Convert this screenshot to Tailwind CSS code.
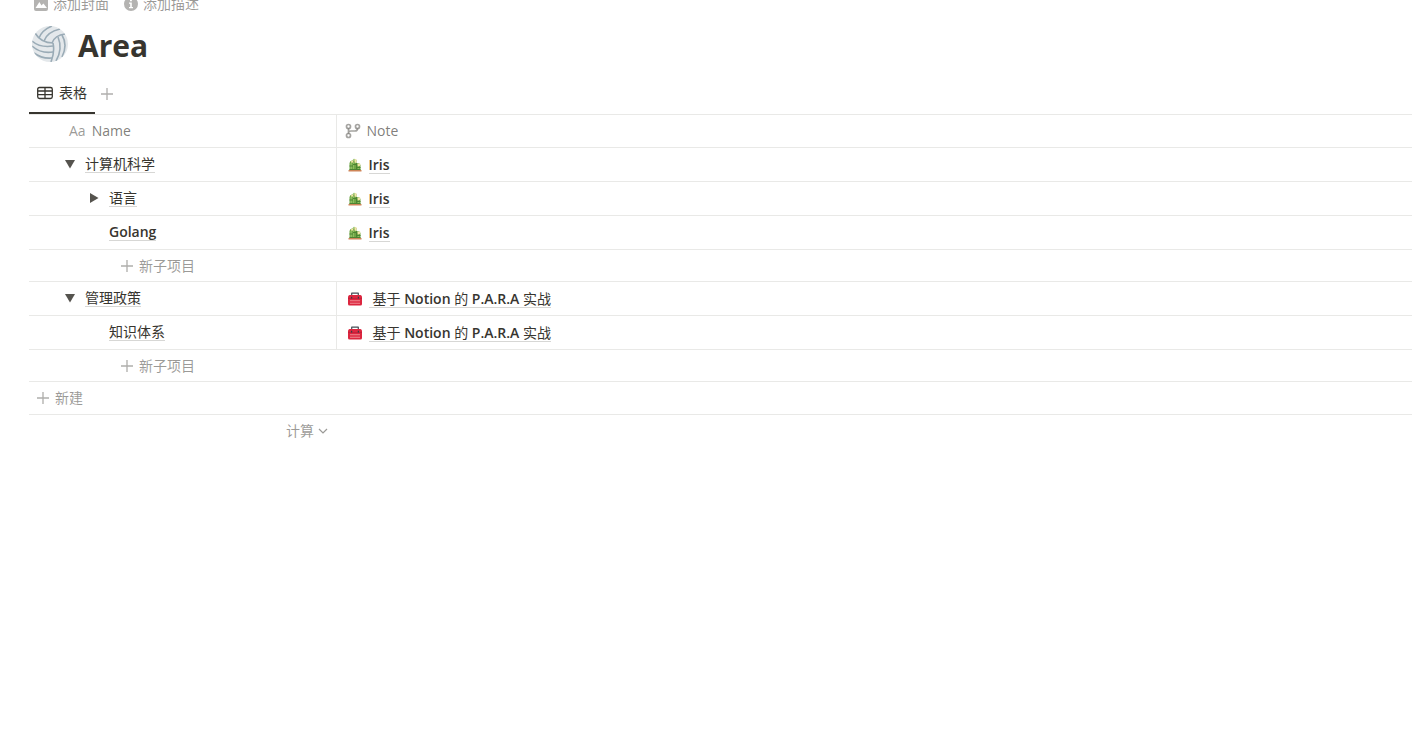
<!DOCTYPE html>
<html lang="zh-CN">
<head>
    <meta charset="UTF-8">
    <meta name="viewport" content="width=device-width, initial-scale=1.0">
    <title>Area</title>
    <script src="https://cdn.jsdelivr.net/npm/@tailwindcss/browser@4"></script>
    <style>
        body {
            font-family: 'Open Sans', 'Noto Sans CJK SC', sans-serif;
        }
    </style>
</head>
<body class="bg-white text-sm text-[#37352f] overflow-x-hidden">
    <!-- Shared icons -->
    <svg class="hidden">
        <symbol id="plus" viewBox="0 0 12 12">
            <path d="M6 0v12M0 6h12" fill="none" stroke="currentColor" stroke-width="1.3"/>
        </symbol>
        <symbol id="bamboo" viewBox="0 0 14 14">
            <path d="M1.500 5Q2 2.800 4 2.500L6 1l2.500 1v3l3 .5 1 1.500V12h-11z" fill="#6fa544"/>
            <path d="M2.500 5h1.500v6H2.500zM5 4h1v7H5zM10 7h1v4h-1z" fill="#8dbd60"/>
            <path d="M1.500 7.500H5v1H1.500zM5 6h4v1H5zM8 9h4.500v1H8zM8 5h1v6H8zM1.500 11h11v1h-11z" fill="#4c8433"/>
            <path d="M3 3.200 5.200 2v2.200L3.500 5zM6.200 1.200h2.300v3.300L6.800 5zM9.500 5.700l2.700-.2v2.300l-2.400.4z" fill="#f3e5a8"/>
            <path d="M5 1.200 6.300.5v1.700L5 3z" fill="#a7d08c"/>
            <path d="M.500 12h13v1.500H.500z" fill="#ce8558"/>
        </symbol>
        <symbol id="toolbox" viewBox="0 0 14 14">
            <path d="M3.700 3.500V1.200h6.600v2.300" fill="none" stroke="#454d55" stroke-width="1.200" stroke-linejoin="round"/>
            <path d="M1.500 3h11Q14 3.500 14 5v7q0 1.500-1.500 1.500h-11Q0 13.500 0 12V5q0-1.500 1.500-2z" fill="#dc263f"/>
            <path d="M0 6.200h14v.7H0z" fill="#b91f38"/>
            <path d="M3 4.800h1.200v1.700H3zM9.800 4.800H11v1.700H9.800z" fill="#343f46"/>
            <path d="M2 8.200h10v1H2zM2 10.800h10v1H2z" fill="#ef8a92"/>
        </symbol>
        <symbol id="down" viewBox="0 0 10 10">
            <path d="M0 1h10L5 9.500z" fill="currentColor"/>
        </symbol>
    </svg>

    <main class="pl-[29px] -mt-1.5">
        <div class="flex items-center h-5 gap-3.5 pl-1 text-[#37352f]/50">
            <button class="flex items-center gap-1 leading-5">
                <svg class="w-4 h-4" viewBox="0 0 16 16">
                    <path d="M3 1h10q2 0 2 2v10q0 2-2 2H3q-2 0-2-2V3q0-2 2-2zm0 11h11l-3.600-4.500-1.900 2L6.400 6 2.500 12z" fill="currentColor" fill-rule="evenodd" opacity=".75"/>
                </svg>
                添加封面
            </button>
            <button class="flex items-center gap-1 leading-5">
                <svg class="w-4 h-4" viewBox="0 0 16 16">
                    <path d="M8 1a7 7 0 1 1 0 14A7 7 0 0 1 8 1zM6 6.500v1.200h1.200v3.300H6v1.300h4V11H8.800V6.500zM7 3.500v1.700h1.900V3.500z" fill="currentColor" fill-rule="evenodd" opacity=".75"/>
                </svg>
                添加描述
            </button>
        </div>

        <div class="flex items-center h-[60px] gap-2.5 pl-[3px]">
            <!-- Volleyball -->
            <svg class="w-9 h-9" viewBox="0 0 36 36">
                <defs><clipPath id="ball"><circle cx="18" cy="18" r="18"/></clipPath></defs>
                <circle cx="18" cy="18" r="18" fill="#e4e8eb"/>
                <g clip-path="url(#ball)" fill="none" stroke="#9aabb6" stroke-width="1.600">
                    <path d="M3 7Q9 17 21 17"/>
                    <path d="M0 15Q8 22 21 20"/>
                    <path d="M0 20Q9 28 21 26"/>
                    <path d="M2 27Q10 33 20 32"/>
                    <path d="M7 12Q10 4 20 0"/>
                    <path d="M12 15Q15 6 28 3"/>
                    <path d="M20 17Q23 9 33 8"/>
                    <path d="M21 17Q23 26 19 36"/>
                    <path d="M26 11Q31 23 24 35"/>
                    <path d="M30 9Q36 19 30 31"/>
                </g>
            </svg>
            <h1 class="pt-1 text-3xl font-bold">Area</h1>
        </div>

        <nav class="flex h-[41px] border-b border-[#e9e9e7]">
            <button class="flex items-center gap-1.5 px-2 border-b-2 border-[#37352f]">
                <svg class="w-4 h-4" viewBox="0 0 16 16">
                    <path d="M2.500 2.500h11q1.800 0 1.800 1.800v7.400q0 1.800-1.800 1.800h-11Q.7 13.500.7 11.700V4.300q0-1.800 1.800-1.800zM1 6h14M1 9.700h14M8 2.500v11" fill="none" stroke="currentColor" stroke-width="1.300"/>
                </svg>
                表格
            </button>
            <button class="flex items-center px-1.5 text-[#37352f]/40" aria-label="添加视图">
                <svg class="w-3 h-3"><use href="#plus"/></svg>
            </button>
        </nav>

        <table class="w-full table-fixed border-collapse text-left">
            <colgroup>
                <col class="w-[307px]">
                <col>
            </colgroup>
            <thead>
                <tr class="h-8 border-b border-[#e9e9e7] text-[#37352f]/65">
                    <th class="p-0 pl-10 font-normal border-r border-[#e9e9e7]">
                        <div class="flex items-center gap-1.5"><span class="text-[#37352f]/50" aria-hidden="true">Aa</span>Name</div>
                    </th>
                    <th class="p-0 pl-2 font-normal">
                        <div class="flex items-center gap-1.5">
                            <svg class="w-4 h-4 text-[#37352f]/45" viewBox="0 0 16 16" fill="none" stroke="currentColor" stroke-width="1.700">
                                <circle cx="3.500" cy="3.500" r="2"/>
                                <circle cx="12.500" cy="3.500" r="2"/>
                                <circle cx="3.500" cy="12.500" r="2"/>
                                <path d="M3.500 5.500v5M12.500 5.500Q12.500 8 10 8H6Q3.500 8 3.500 10"/>
                            </svg>
                            Note
                        </div>
                    </th>
                </tr>
            </thead>
            <tbody>
                <tr class="h-[34px] border-b border-[#e9e9e7]">
                    <td class="p-0 pl-9 border-r border-[#e9e9e7]">
                        <div class="flex items-center gap-2.5">
                            <button class="text-[#37352f]/85" aria-label="折叠"><svg class="w-2.5 h-2.5"><use href="#down"/></svg></button>
                            <a href="#" class="leading-4 border-b border-[#37352f]/20">计算机科学</a>
                        </div>
                    </td>
                    <td class="p-0 pt-0.5 pl-[11px]">
                        <a href="#" class="flex items-center gap-[7px] font-semibold"><svg class="w-3.5 h-3.5"><use href="#bamboo"/></svg><span class="leading-4 border-b border-[#37352f]/20">Iris</span></a>
                    </td>
                </tr>
                <tr class="h-[34px] border-b border-[#e9e9e7]">
                    <td class="p-0 pl-15 border-r border-[#e9e9e7]">
                        <div class="flex items-center gap-2.5">
                            <button class="text-[#37352f]/85" aria-label="展开"><svg class="w-2.5 h-2.5 -rotate-90"><use href="#down"/></svg></button>
                            <a href="#" class="leading-4 border-b border-[#37352f]/20">语言</a>
                        </div>
                    </td>
                    <td class="p-0 pt-0.5 pl-[11px]">
                        <a href="#" class="flex items-center gap-[7px] font-semibold"><svg class="w-3.5 h-3.5"><use href="#bamboo"/></svg><span class="leading-4 border-b border-[#37352f]/20">Iris</span></a>
                    </td>
                </tr>
                <tr class="h-[34px] border-b border-[#e9e9e7]">
                    <td class="p-0 pl-20 border-r border-[#e9e9e7]">
                        <div class="flex"><a href="#" class="leading-4 font-semibold border-b border-[#37352f]/20">Golang</a></div>
                    </td>
                    <td class="p-0 pt-0.5 pl-[11px]">
                        <a href="#" class="flex items-center gap-[7px] font-semibold"><svg class="w-3.5 h-3.5"><use href="#bamboo"/></svg><span class="leading-4 border-b border-[#37352f]/20">Iris</span></a>
                    </td>
                </tr>
                <tr class="h-8 border-b border-[#e9e9e7]">
                    <td colspan="2" class="p-0 pt-0.5 pl-[92px]">
                        <button class="flex items-center gap-1.5 text-[#37352f]/50"><svg class="w-3 h-3 opacity-80"><use href="#plus"/></svg>新子项目</button>
                    </td>
                </tr>
                <tr class="h-[34px] border-b border-[#e9e9e7]">
                    <td class="p-0 pl-9 border-r border-[#e9e9e7]">
                        <div class="flex items-center gap-2.5">
                            <button class="text-[#37352f]/85" aria-label="折叠"><svg class="w-2.5 h-2.5"><use href="#down"/></svg></button>
                            <a href="#" class="leading-4 border-b border-[#37352f]/20">管理政策</a>
                        </div>
                    </td>
                    <td class="p-0 pt-0.5 pl-[11px]">
                        <a href="#" class="flex items-center gap-[7px]"><svg class="w-3.5 h-3.5"><use href="#toolbox"/></svg><span class="pl-1 leading-4 border-b border-[#37352f]/20">基于 <b class="font-semibold">Notion</b> 的 <b class="font-semibold">P.A.R.A</b> 实战</span></a>
                    </td>
                </tr>
                <tr class="h-[34px] border-b border-[#e9e9e7]">
                    <td class="p-0 pl-20 border-r border-[#e9e9e7]">
                        <div class="flex"><a href="#" class="leading-4 border-b border-[#37352f]/20">知识体系</a></div>
                    </td>
                    <td class="p-0 pt-0.5 pl-[11px]">
                        <a href="#" class="flex items-center gap-[7px]"><svg class="w-3.5 h-3.5"><use href="#toolbox"/></svg><span class="pl-1 leading-4 border-b border-[#37352f]/20">基于 <b class="font-semibold">Notion</b> 的 <b class="font-semibold">P.A.R.A</b> 实战</span></a>
                    </td>
                </tr>
                <tr class="h-8 border-b border-[#e9e9e7]">
                    <td colspan="2" class="p-0 pt-0.5 pl-[92px]">
                        <button class="flex items-center gap-1.5 text-[#37352f]/50"><svg class="w-3 h-3 opacity-80"><use href="#plus"/></svg>新子项目</button>
                    </td>
                </tr>
                <tr class="h-[33px] border-b border-[#e9e9e7]">
                    <td colspan="2" class="p-0 pl-2">
                        <button class="flex items-center gap-1.5 text-[#37352f]/50"><svg class="w-3 h-3 opacity-80"><use href="#plus"/></svg>新建</button>
                    </td>
                </tr>
            </tbody>
            <tfoot>
                <tr class="h-8">
                    <td class="p-0 pt-0.5 pr-2">
                        <button class="flex items-center gap-1 ml-auto text-[#37352f]/50">计算
                            <svg class="w-2.5 h-2.5" viewBox="0 0 10 10"><path d="m1 3 4 4 4-4" fill="none" stroke="currentColor" stroke-width="1.200"/></svg>
                        </button>
                    </td>
                    <td></td>
                </tr>
            </tfoot>
        </table>
    </main>
</body>
</html>
